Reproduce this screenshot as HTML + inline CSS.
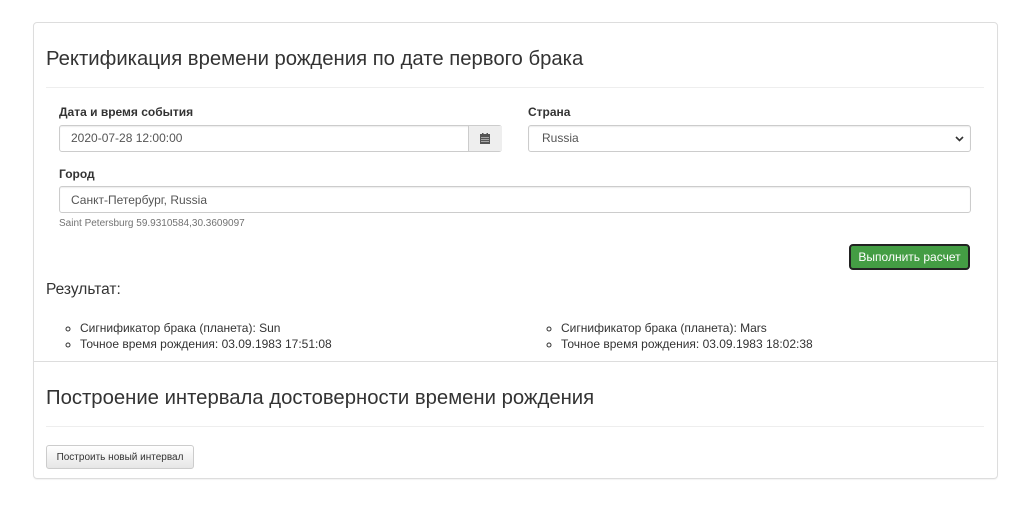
<!DOCTYPE html><html><head><meta charset="utf-8"><style>
body{margin:0;background:#fff;font-family:"Liberation Sans",sans-serif;color:#333;width:1024px;height:520px;position:relative;overflow:hidden}
.a{position:absolute}
.panel{left:33px;top:22px;width:963px;height:455px;border:1px solid #ddd;border-radius:4px;box-shadow:0 1px 1px rgba(0,0,0,.05)}
.h{font-size:20.3px;color:#333}
.lbl{font-size:12px;font-weight:bold}
.inp{border:1px solid #ccc;border-radius:3px;height:27px;box-sizing:border-box;font-size:12px;line-height:25px;padding-left:11px;color:#555;box-shadow:inset 0 1px 1px rgba(0,0,0,.075)}
.hr{height:1px;background:#eee}
li{font-size:12px}
</style></head><body>
<div class="a panel"></div>
<div class="a h" style="left:46px;top:48px">Ректификация времени рождения по дате первого брака</div>
<div class="a hr" style="left:46px;top:87px;width:938px"></div>
<div class="a lbl" style="left:59px;top:105px">Дата и время события</div>
<div class="a inp" style="left:59px;top:125px;width:443px">2020-07-28 12:00:00</div>
<div class="a" style="left:468px;top:126px;width:33px;height:25px;background:#eee;border-left:1px solid #ccc"></div>
<svg class="a" style="left:480px;top:133px" width="10" height="11" viewBox="0 0 10 11"><rect x="0" y="1" width="10" height="10" fill="#555"/><rect x="2" y="0" width="1.5" height="2" fill="#555"/><rect x="6.5" y="0" width="1.5" height="2" fill="#555"/><g fill="#ddd"><rect x="1" y="4" width="8" height=".6"/><rect x="1" y="6" width="8" height=".6"/><rect x="1" y="8" width="8" height=".6"/></g></svg>
<div class="a lbl" style="left:528px;top:105px">Страна</div>
<div class="a inp" style="left:528px;top:125px;width:443px;padding-left:13px">Russia</div>
<svg class="a" style="left:955px;top:136px" width="9" height="6"><path d="M1 1l3.5 3.5L8 1" stroke="#333" stroke-width="1.6" fill="none"/></svg>
<div class="a lbl" style="left:59px;top:167px">Город</div>
<div class="a inp" style="left:59px;top:186px;width:912px;line-height:27px">Санкт-Петербург, Russia</div>
<div class="a" style="left:59px;top:218px;font-size:10px;color:#737373">Saint Petersburg 59.9310584,30.3609097</div>
<div class="a" style="left:849px;top:244px;width:121px;height:26px;box-sizing:border-box;background:#449d44;border:2px solid #222;border-radius:4px;color:#fff;font-size:12px;text-align:center;line-height:23px">Выполнить расчет</div>
<div class="a" style="left:46px;top:281px;font-size:15.5px">Результат:</div>
<ul class="a" style="left:40px;top:320px;margin:0;padding-left:40px;list-style:circle;line-height:16px"><li>Сигнификатор брака (планета): Sun</li><li>Точное время рождения: 03.09.1983 17:51:08</li></ul>
<ul class="a" style="left:521px;top:320px;margin:0;padding-left:40px;list-style:circle;line-height:16px"><li>Сигнификатор брака (планета): Mars</li><li>Точное время рождения: 03.09.1983 18:02:38</li></ul>
<div class="a" style="left:34px;top:361px;width:963px;height:1px;background:#ddd"></div>
<div class="a h" style="left:46px;top:387px">Построение интервала достоверности времени рождения</div>
<div class="a hr" style="left:46px;top:426px;width:938px"></div>
<div class="a" style="left:46px;top:445px;width:148px;height:24px;box-sizing:border-box;border:1px solid #ccc;border-radius:3px;background:linear-gradient(#fff,#e6e6e6);font-size:10px;text-align:center;line-height:23px">Построить новый интервал</div>
</body></html>
